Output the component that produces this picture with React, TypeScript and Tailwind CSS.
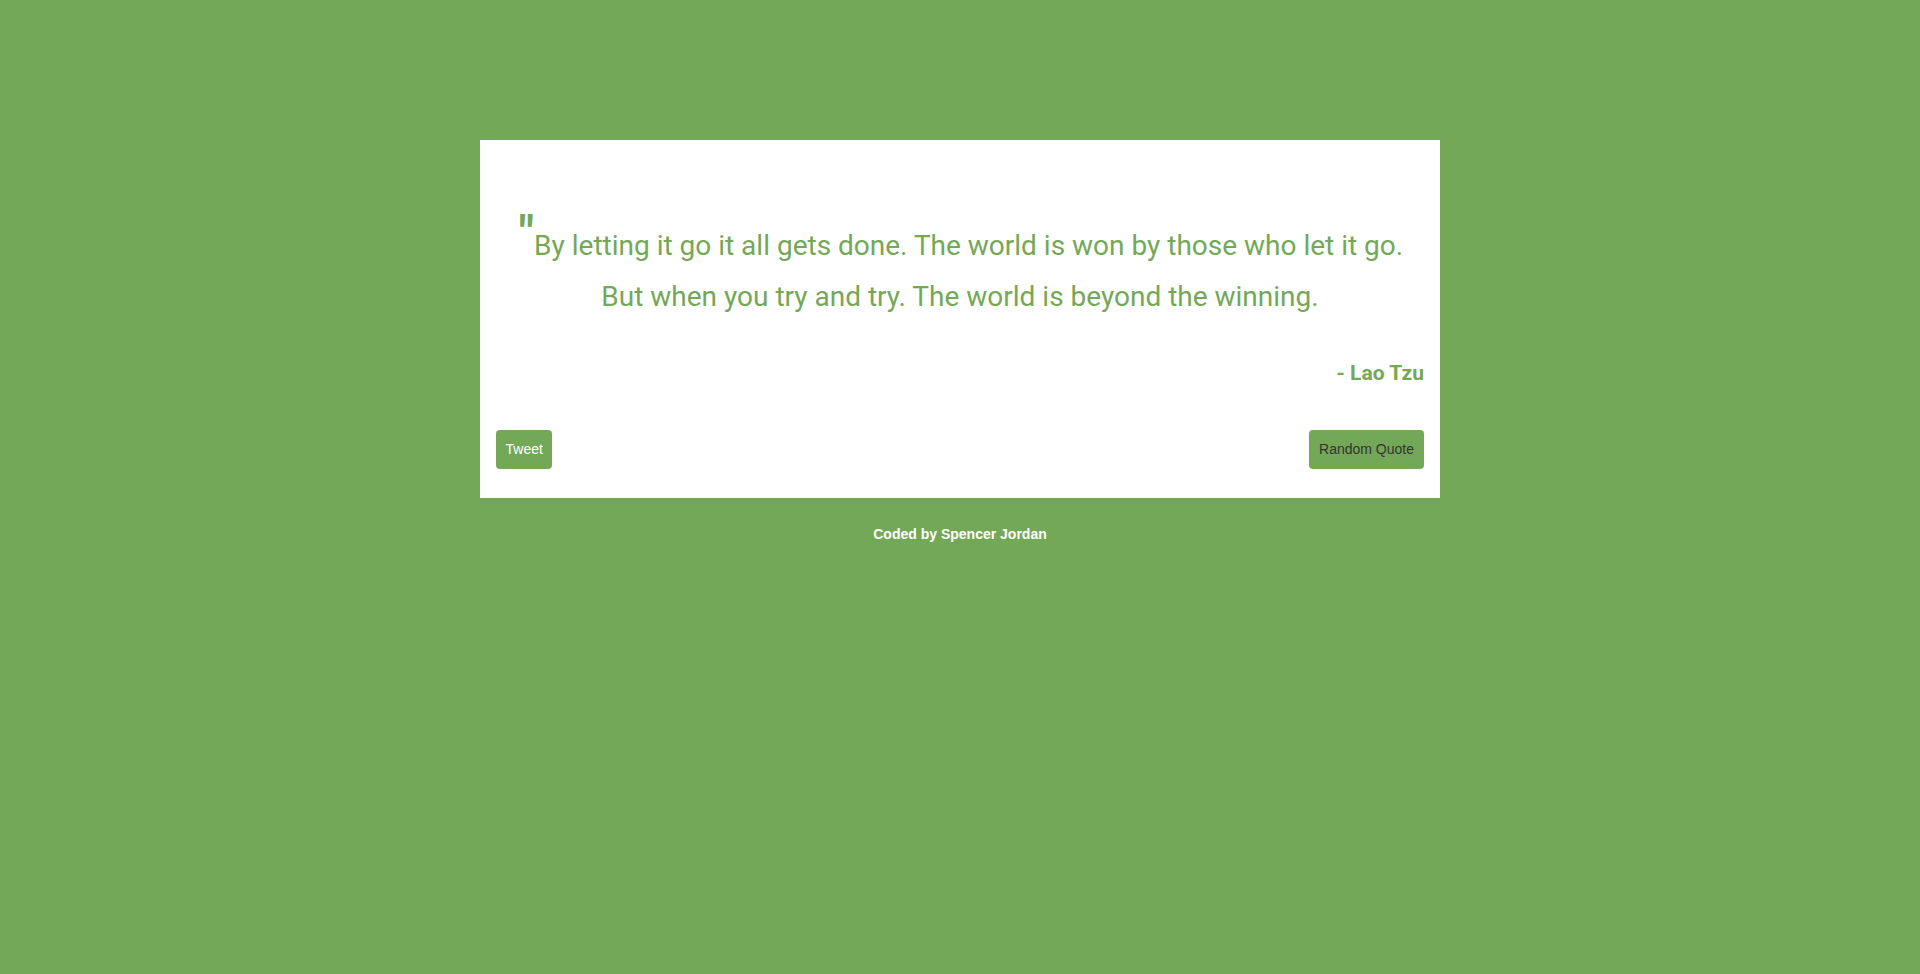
import React from "react";

export default function App() {
  return (
    <div className="min-h-[974px] w-full bg-[#73a857] pt-[140px]">
      <div className="mx-auto w-[960px] bg-white px-4 pt-[80px] pb-[29px]">
        <div
          className="text-center text-[28px] leading-[51px] text-[#73a857]"
          style={{ fontFamily: "Roboto, 'Liberation Sans', sans-serif" }}
        >
          <span className="relative left-[2px] top-[-5px] mr-[2px] inline-block text-[48px] font-bold leading-[20px]">"</span>
          By letting it go it all gets done. The world is won by those who let it go. But when you try and try. The world is beyond the winning.
        </div>
        <div
          className="mt-[39px] text-right text-[21px] font-bold leading-[24px] text-[#73a857]"
          style={{ fontFamily: "Roboto, 'Liberation Sans', sans-serif" }}
        >
          - Lao Tzu
        </div>
        <div
          className="mt-[45px] flex items-center justify-between"
          style={{ fontFamily: "'Liberation Sans', Arial, sans-serif" }}
        >
          <button className="h-[39px] rounded-[4px] bg-[#73a857] px-[9.5px] text-[14px] text-white">Tweet</button>
          <button className="h-[39px] rounded-[4px] bg-[#73a857] px-[10px] text-[14px] text-[#333333]">Random Quote</button>
        </div>
      </div>
      <div
        className="mt-[26px] text-center text-[14px] font-bold text-white"
        style={{ fontFamily: "'Liberation Sans', Arial, sans-serif" }}
      >
        Coded by Spencer Jordan
      </div>
    </div>
  );
}
